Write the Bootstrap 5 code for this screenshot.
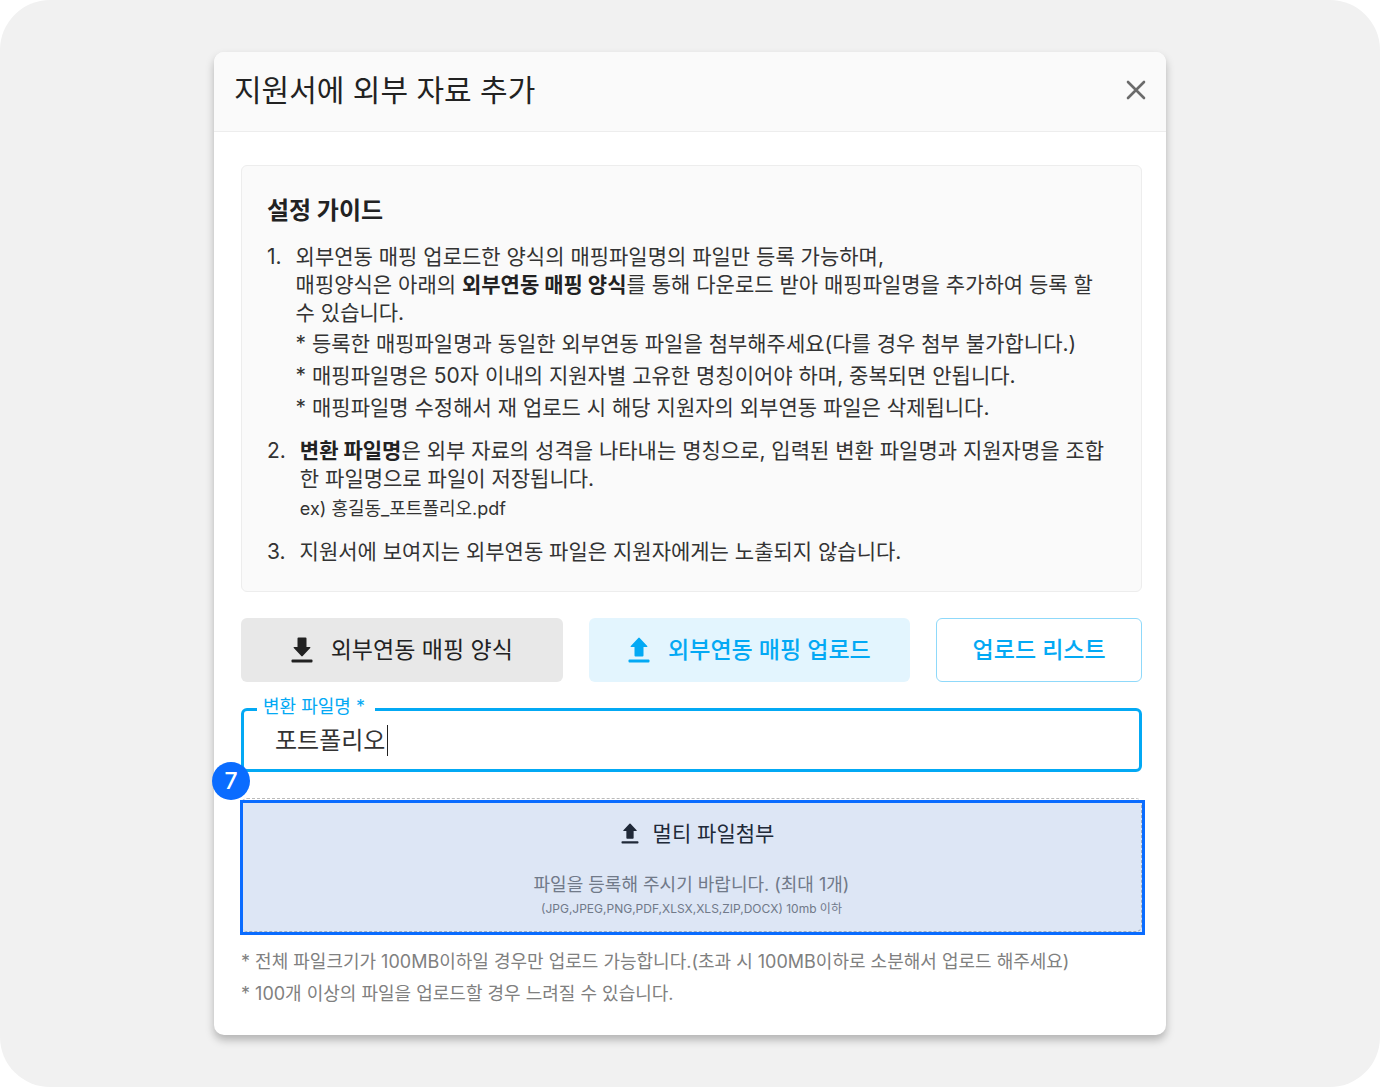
<!DOCTYPE html>
<html lang="ko">
<head>
<meta charset="utf-8">
<meta name="viewport" content="width=device-width, initial-scale=1">
<title>지원서에 외부 자료 추가</title>
<link rel="stylesheet" href="https://cdn.jsdelivr.net/npm/bootstrap@5.3.0/dist/css/bootstrap.min.css">
<style>
  :root { --sky: #03a9f4; --accent: #0a6cff; --ink: #222; }
  body { font-family: Inter, "Noto Sans CJK KR", sans-serif; color: var(--ink); background: #fff; }
  .stage { background: #f1f1f1; border-radius: 50px; padding: 52px 16px; }
  .dialog { width: 100%; max-width: 952px; background: #fff; border-radius: 10px; box-shadow: 0 5px 8px rgba(0,0,0,.26); }
  .dialog-head { height: 80px; padding: 0 20px 4px; background: #fafafa; border-bottom: 1px solid #ededed; border-radius: 10px 10px 0 0; }
  .dialog-head h1 { font-size: 30px; line-height: 40px; font-weight: 400; }
  .dialog-body { padding: 33px 24px 25px 27px; }
  .close-btn { line-height: 0; }
  .guide { background: #fafafa; border: 1px solid #ededed; border-radius: 6px; padding: 29px 25px 25px; }
  .guide h2 { font-size: 24px; line-height: 32px; font-weight: 700; }
  .guide ol { font-size: 21px; line-height: 28px; margin-top: 16px; gap: 13px; color: #333; }
  .guide li { gap: 14px; }
  .guide strong { color: var(--ink); }
  .hints { line-height: 32px; margin-top: 1px; }
  .example { font-size: 18px; line-height: 32px; }
  .actions { display: grid; grid-template-columns: 322fr 322fr 206fr; gap: 26px; margin-top: 26px; }
  .actions .btn { height: 64px; padding: 0; font-size: 23px; border-radius: 6px; --bs-btn-font-weight: 400; }
  .actions .icon-btn { gap: 18px; }
  .btn-gray { --bs-btn-bg: #e8e8e8; --bs-btn-color: #222; --bs-btn-hover-bg: #ddd; }
  .btn-pale { --bs-btn-bg: #e3f5fe; --bs-btn-color: var(--sky); --bs-btn-hover-bg: #d0eefd; --bs-btn-hover-color: var(--sky); }
  .actions .btn-pale, .actions .btn-line { font-weight: 500; }
  .btn-line { --bs-btn-color: var(--sky); --bs-btn-border-color: #8fd9fa; --bs-btn-hover-color: var(--sky); --bs-btn-hover-border-color: var(--sky); }
  .field { margin-top: 26px; }
  .field .form-control { height: 64px; padding: 0 31px 4px; border: 3px solid var(--sky); border-radius: 6px; font-size: 24px; color: #333; box-shadow: none; }
  .field label { position: absolute; left: 16px; top: -13px; padding: 0 10px 0 6px; line-height: 24px; font-size: 18px; color: var(--sky); background: #fff; }
  .caret { position: absolute; left: 146px; top: 17px; width: 1px; height: 31px; background: #222; }
  .drop { margin-top: 26px; height: 134px; border: 1px dashed #bbb; border-radius: 6px; background: #fff; padding: 8px 0 0; color: #222; }
  .drop-title { font-size: 21px; line-height: 32px; gap: 14px; padding-left: 12px; }
  .drop-text { font-size: 18px; line-height: 24px; margin-top: 23px; color: #808080; }
  .drop-types { font-size: 12px; line-height: 24px; color: #808080; }
  .marker { position: absolute; inset: 2px -3px -3px -1px; border: 3px solid var(--accent); background: rgba(30,90,190,.15); pointer-events: none; }
  .marker-num { position: absolute; left: -29px; top: -36px; width: 38px; height: 38px; border-radius: 50%; background: var(--accent); color: #fff; font-size: 23px; font-weight: 500; line-height: 38px; text-align: center; }
  .notes { font-size: 18px; line-height: 32px; margin-top: 14px; color: #808080; }
</style>
</head>
<body>
<main class="stage min-vh-100 d-flex justify-content-center align-items-start">
  <section class="dialog" role="dialog" aria-labelledby="dialog-title">
    <header class="dialog-head d-flex align-items-center justify-content-between">
      <h1 id="dialog-title" class="m-0">지원서에 외부 자료 추가</h1>
      <button type="button" class="close-btn btn p-0 border-0" aria-label="닫기">
        <svg width="20" height="20" viewBox="0 0 20 20" fill="none" stroke="#6b6b6b" stroke-width="2.6" stroke-linecap="round"><path d="M2 2 18 18M18 2 2 18"/></svg>
      </button>
    </header>
    <div class="dialog-body">
      <div class="guide">
        <h2 class="m-0">설정 가이드</h2>
        <ol class="list-unstyled d-flex flex-column mb-0">
          <li class="d-flex"><span>1.</span>
            <div>외부연동 매핑 업로드한 양식의 매핑파일명의 파일만 등록 가능하며,<br>매핑양식은 아래의 <strong>외부연동 매핑 양식</strong>를 통해 다운로드 받아 매핑파일명을 추가하여 등록 할 수 있습니다.
              <div class="hints">* 등록한 매핑파일명과 동일한 외부연동 파일을 첨부해주세요(다를 경우 첨부 불가합니다.)<br>* 매핑파일명은 50자 이내의 지원자별 고유한 명칭이어야 하며, 중복되면 안됩니다.<br>* 매핑파일명 수정해서 재 업로드 시 해당 지원자의 외부연동 파일은 삭제됩니다.</div>
            </div>
          </li>
          <li class="d-flex"><span>2.</span>
            <div><strong>변환 파일명</strong>은 외부 자료의 성격을 나타내는 명칭으로, 입력된 변환 파일명과 지원자명을 조합한 파일명으로 파일이 저장됩니다.
              <div class="example">ex) 홍길동_포트폴리오.pdf</div>
            </div>
          </li>
          <li class="d-flex"><span>3.</span>
            <div>지원서에 보여지는 외부연동 파일은 지원자에게는 노출되지 않습니다.</div>
          </li>
        </ol>
      </div>

      <div class="actions">
        <button type="button" class="btn btn-gray icon-btn d-flex align-items-center justify-content-center">
          <svg width="22" height="26" viewBox="0 0 22 26" fill="currentColor"><path d="M6.500 1.500Q6.500.5 7.500.5h7q1 0 1 1V10h3.300q1.200 0 .4 1l-7.500 8.100q-.7.700-1.400 0L2.800 11q-.8-1 .4-1h3.300z"/><rect x=".5" y="22.500" width="21" height="3" rx="1"/></svg>
          <span>외부연동 매핑 양식</span>
        </button>
        <button type="button" class="btn btn-pale icon-btn d-flex align-items-center justify-content-center">
          <svg width="22" height="26" viewBox="0 0 22 26" fill="currentColor"><path d="M6.500 18.500V10H3.200q-1.200 0-.4-1l7.500-8.100q.7-.7 1.400 0L19.200 9q.8 1-.4 1h-3.300v8.500q0 1-1 1h-7q-1 0-1-1z"/><rect x=".5" y="22.500" width="21" height="3" rx="1"/></svg>
          <span>외부연동 매핑 업로드</span>
        </button>
        <button type="button" class="btn btn-line">업로드 리스트</button>
      </div>

      <div class="field position-relative">
        <input id="file-alias" type="text" class="form-control" value="포트폴리오" required>
        <label for="file-alias">변환 파일명 *</label>
        <span class="caret" aria-hidden="true"></span>
      </div>

      <div class="position-relative">
        <button type="button" class="drop w-100 d-block text-center">
          <span class="drop-title d-flex align-items-center justify-content-center">
            <svg width="18" height="21" viewBox="0 0 22 26" fill="currentColor"><path d="M6.500 18.500V10H3.200q-1.200 0-.4-1l7.500-8.100q.7-.7 1.400 0L19.200 9q.8 1-.4 1h-3.300v8.500q0 1-1 1h-7q-1 0-1-1z"/><rect x=".5" y="22.500" width="21" height="3" rx="1"/></svg>
            <span>멀티 파일첨부</span>
          </span>
          <span class="drop-text d-block">파일을 등록해 주시기 바랍니다. (최대 1개)</span>
          <span class="drop-types d-block">(JPG,JPEG,PNG,PDF,XLSX,XLS,ZIP,DOCX) 10mb 이하</span>
        </button>
        <div class="marker"></div>
        <span class="marker-num">7</span>
      </div>

      <div class="notes">* 전체 파일크기가 100MB이하일 경우만 업로드 가능합니다.(초과 시 100MB이하로 소분해서 업로드 해주세요)<br>* 100개 이상의 파일을 업로드할 경우 느려질 수 있습니다.</div>
    </div>
  </section>
</main>
<script src="https://cdn.jsdelivr.net/npm/bootstrap@5.3.0/dist/js/bootstrap.bundle.min.js"></script>
</body>
</html>
